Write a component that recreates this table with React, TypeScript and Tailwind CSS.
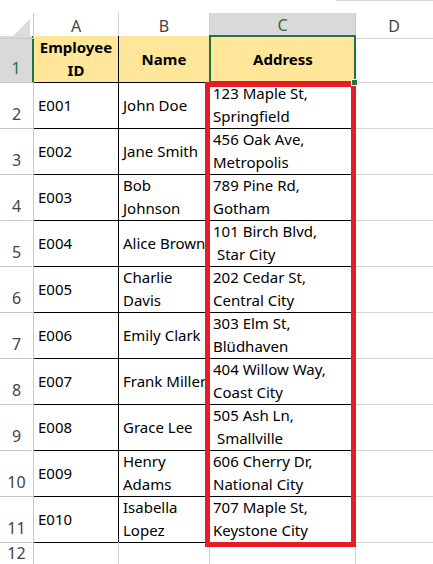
import React from 'react';

const rows = [
  { n: '2', id: 'E001', name: ['John Doe'], addr: ['123 Maple St,', 'Springfield'] },
  { n: '3', id: 'E002', name: ['Jane Smith'], addr: ['456 Oak Ave,', 'Metropolis'] },
  { n: '4', id: 'E003', name: ['Bob', 'Johnson'], addr: ['789 Pine Rd,', 'Gotham'] },
  { n: '5', id: 'E004', name: ['Alice Brown'], addr: ['101 Birch Blvd,', ' Star City'] },
  { n: '6', id: 'E005', name: ['Charlie', 'Davis'], addr: ['202 Cedar St,', 'Central City'] },
  { n: '7', id: 'E006', name: ['Emily Clark'], addr: ['303 Elm St,', 'Blüdhaven'] },
  { n: '8', id: 'E007', name: ['Frank Miller'], addr: ['404 Willow Way,', 'Coast City'] },
  { n: '9', id: 'E008', name: ['Grace Lee'], addr: ['505 Ash Ln,', ' Smallville'] },
  { n: '10', id: 'E009', name: ['Henry', 'Adams'], addr: ['606 Cherry Dr,', 'National City'] },
  { n: '11', id: 'E010', name: ['Isabella', 'Lopez'], addr: ['707 Maple St,', 'Keystone City'] },
];

const cols = 'grid grid-cols-[34px_85px_91px_146px_1fr]';

const App = () => {
  return (
    <div className="relative w-[433px] h-[564px] overflow-hidden bg-white text-black font-['Noto_Sans',sans-serif] text-[15px]">
      {/* strip above the headers */}
      <div className="h-[13px] flex justify-end">
        <div className="w-[97px] h-px bg-[#d4d4d4]" />
      </div>

      {/* column letters */}
      <div className={`${cols} h-[23px] text-[16px] text-[#444]`}>
        <div className="relative border-r border-b border-[#c8c8c8]">
          <div className="absolute right-[3px] bottom-[2px] w-0 h-0 border-l-[17px] border-l-transparent border-b-[17px] border-b-[#dcdcdc]" />
        </div>
        <div className="flex items-center justify-center border-r border-b border-[#d4d4d4]">A</div>
        <div className="flex items-center justify-center border-r border-b border-[#d4d4d4]">B</div>
        <div className="flex items-center justify-center border-r border-b-2 border-r-[#c8c8c8] border-b-[#217346] bg-[#d9d9d9] text-[#217346]">C</div>
        <div className="flex items-center justify-center border-b border-[#d4d4d4] pr-[1px]">D</div>
      </div>

      {/* header row */}
      <div className={`${cols} h-[46px] leading-[23px]`}>
        <div className="flex items-end justify-center pb-[2px] text-[16px] bg-[#d9d9d9] text-[#217346] border-r-2 border-r-[#217346] border-b border-b-[#c8c8c8]">1</div>
        <div className="flex flex-col items-center justify-center font-bold bg-[#ffe699] border-r border-b border-black">
          <span>Employee</span>
          <span>ID</span>
        </div>
        <div className="flex items-center justify-center font-bold bg-[#ffe699] border-r border-b border-black">Name</div>
        <div className="flex items-center justify-center font-bold bg-[#ffe699] border-b border-black">Address</div>
        <div className="border-b border-[#d4d4d4]" />
      </div>

      {/* data rows */}
      {rows.map((r) => (
        <div key={r.id} className={`${cols} h-[46px] leading-[23px]`}>
          <div className="flex items-end justify-center pb-[2px] text-[16px] text-[#444] border-r border-b border-[#c8c8c8]">{r.n}</div>
          <div className="flex items-center pl-[4px] border-r border-b border-black">{r.id}</div>
          <div className="flex flex-col justify-center pl-[4px] whitespace-nowrap overflow-hidden border-r border-b border-black">
            {r.name.map((t) => (
              <span key={t}>{t}</span>
            ))}
          </div>
          <div className="flex flex-col justify-center pl-[3px] whitespace-pre border-r border-b border-black">
            {r.addr.map((t) => (
              <span key={t}>{t}</span>
            ))}
          </div>
          <div className="border-b border-[#d4d4d4]" />
        </div>
      ))}

      {/* row 12 */}
      <div className={`${cols} h-[22px]`}>
        <div className="flex items-center justify-center leading-[20px] text-[16px] text-[#444] border-r border-[#c8c8c8]">12</div>
        <div className="border-r border-[#d4d4d4]" />
        <div className="border-r border-[#d4d4d4]" />
        <div className="border-r border-[#d4d4d4]" />
        <div />
      </div>

      {/* active cell C1 */}
      <div className="absolute left-[209px] top-[35px] w-[147px] h-[48px] border-2 border-[#217346] pointer-events-none" />

      {/* red highlight around the address column */}
      <div className="absolute left-[205px] top-[82px] w-[151px] h-[465px] border-[5px] border-[#e81c25] pointer-events-none" />

      {/* fill handle */}
      <div className="absolute left-[351px] top-[79px] w-[7px] h-[7px] bg-[#217346] border border-white" />
    </div>
  );
};

export default App;
